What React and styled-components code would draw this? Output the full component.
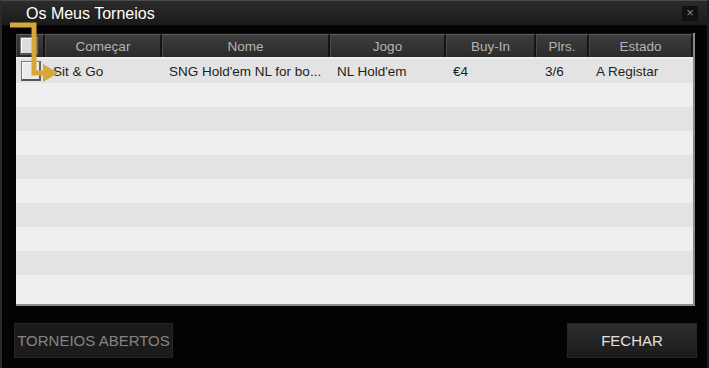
import React from "react";
import styled, { createGlobalStyle } from "styled-components";

const Global = createGlobalStyle`
  html, body { margin: 0; padding: 0; background: #000; }
  body { font-family: "Liberation Sans", Arial, sans-serif; }
`;

const Window = styled.div`
  position: relative;
  width: 709px;
  height: 368px;
  box-sizing: border-box;
  background: #030303;
  border-left: 2px solid #2a2a2a;
  border-right: 2px solid #1c1c1c;
  border-top: 1px solid #4a4a4a;
  display: flex;
  flex-direction: column;
  overflow: hidden;
`;

const TitleBar = styled.div`
  height: 26px;
  display: flex;
  align-items: center;
  justify-content: space-between;
  padding: 0 9px 0 24px;
  background: linear-gradient(#2b2b2b, #1b1b1b);
  border-bottom: 1px solid #0a0a0a;
`;

const Title = styled.div`
  color: #fff;
  font-size: 16px;
  padding-top: 1px;
`;

const Close = styled.div`
  width: 16px;
  height: 15px;
  background: #111;
  color: #888;
  font-size: 13px;
  line-height: 14px;
  text-align: center;
`;

const Body = styled.div`
  flex: 1;
  display: flex;
  flex-direction: column;
  padding: 7px 12px 10px 14px;
`;

const Panel = styled.div`
  width: 679px;
  height: 273px;
  box-sizing: border-box;
  background: #1a1a1a;
  border-right: 2px solid #8a8a8a;
  border-bottom: 2px solid #8a8a8a;
  display: flex;
  flex-direction: column;
  overflow: hidden;
`;

const cols = "29px 117px 168px 116px 90px 53px 1fr";

const HeaderRow = styled.div`
  display: grid;
  grid-template-columns: ${cols};
  height: 24px;
  background: #111;
  padding-top: 1px;
  box-sizing: border-box;
`;

const HeadCell = styled.div`
  background: linear-gradient(#3d3d3d, #2b2b2b);
  border-top: 1px solid #5a5a5a;
  border-left: 1px solid #4a4a4a;
  border-right: 2px solid #141414;
  color: #b4b4b4;
  font-size: 13.5px;
  display: flex;
  align-items: center;
  justify-content: ${(p) => (p.$start ? "flex-start" : "center")};
  box-sizing: border-box;
`;

const Rows = styled.div`
  flex: 1;
  background: #efefef;
  padding-top: 2px;
`;

const Row = styled.div`
  display: grid;
  grid-template-columns: ${cols};
  height: 24px;
  background: ${(p) => (p.$odd ? "#efefef" : "#e3e3e3")};
  color: #1e1e1e;
  font-size: 13.5px;
  align-items: center;
`;

const Cell = styled.div`
  padding-left: ${(p) => p.$pad || 7}px;
  white-space: nowrap;
  overflow: hidden;
`;

const Check = styled.div`
  width: ${(p) => (p.$head ? 15 : 17)}px;
  height: ${(p) => (p.$head ? 15 : 17)}px;
  margin-left: ${(p) => (p.$head ? 3 : 4)}px;
  background: ${(p) => (p.$head ? "#dcdcdc" : "#eaeaea")};
  border: 1px solid #7a7a7a;
  border-bottom: 2px solid #555;
  border-right: 2px solid #666;
  box-shadow: inset 1px 1px 0 #fff;
`;

const Footer = styled.div`
  margin-top: 17px;
  display: flex;
  justify-content: space-between;
  margin-left: -2px;
  margin-right: -2px;
`;

const Button = styled.div`
  height: 35px;
  box-sizing: border-box;
  width: ${(p) => p.$w}px;
  display: flex;
  align-items: center;
  justify-content: center;
  font-size: 15px;
  border: 1px solid #262626;
  background: ${(p) =>
    p.$primary ? "linear-gradient(#2e2e2e, #1a1a1a)" : "#1b1b1b"};
  color: ${(p) => (p.$primary ? "#e0e0e0" : "#858585")};
`;

const Arrow = styled.svg`
  position: absolute;
  left: 0;
  top: 0;
  pointer-events: none;
`;

const headers = ["Começar", "Nome", "Jogo", "Buy-In", "Plrs.", "Estado"];

export default function App() {
  const rows = Array.from({ length: 10 }, (_, i) => i);
  return (
    <>
      <Global />
      <Window>
        <TitleBar>
          <Title>Os Meus Torneios</Title>
          <Close>×</Close>
        </TitleBar>
        <Body>
          <Panel>
            <HeaderRow>
              <HeadCell $start>
                <Check $head />
              </HeadCell>
              {headers.map((h) => (
                <HeadCell key={h}>{h}</HeadCell>
              ))}
            </HeaderRow>
            <Rows>
              {rows.map((i) =>
                i === 0 ? (
                  <Row key={i}>
                    <Cell $pad={1}>
                      <Check />
                    </Cell>
                    <Cell $pad={8}>Sit &amp; Go</Cell>
                    <Cell>SNG Hold'em NL for bo...</Cell>
                    <Cell>NL Hold'em</Cell>
                    <Cell>€4</Cell>
                    <Cell $pad={9}>3/6</Cell>
                    <Cell>A Registar</Cell>
                  </Row>
                ) : (
                  <Row key={i} $odd={i % 2 === 1} />
                )
              )}
            </Rows>
          </Panel>
          <Footer>
            <Button $w={159}>TORNEIOS ABERTOS</Button>
            <Button $w={130} $primary>
              FECHAR
            </Button>
          </Footer>
        </Body>
        <Arrow width="709" height="368">
          <polyline
            points="8,24 32,24 32,72 44,72"
            fill="none"
            stroke="#d8a73a"
            strokeWidth="5"
          />
          <polygon points="41,63 56,72 41,81" fill="#d8a73a" />
        </Arrow>
      </Window>
    </>
  );
}
